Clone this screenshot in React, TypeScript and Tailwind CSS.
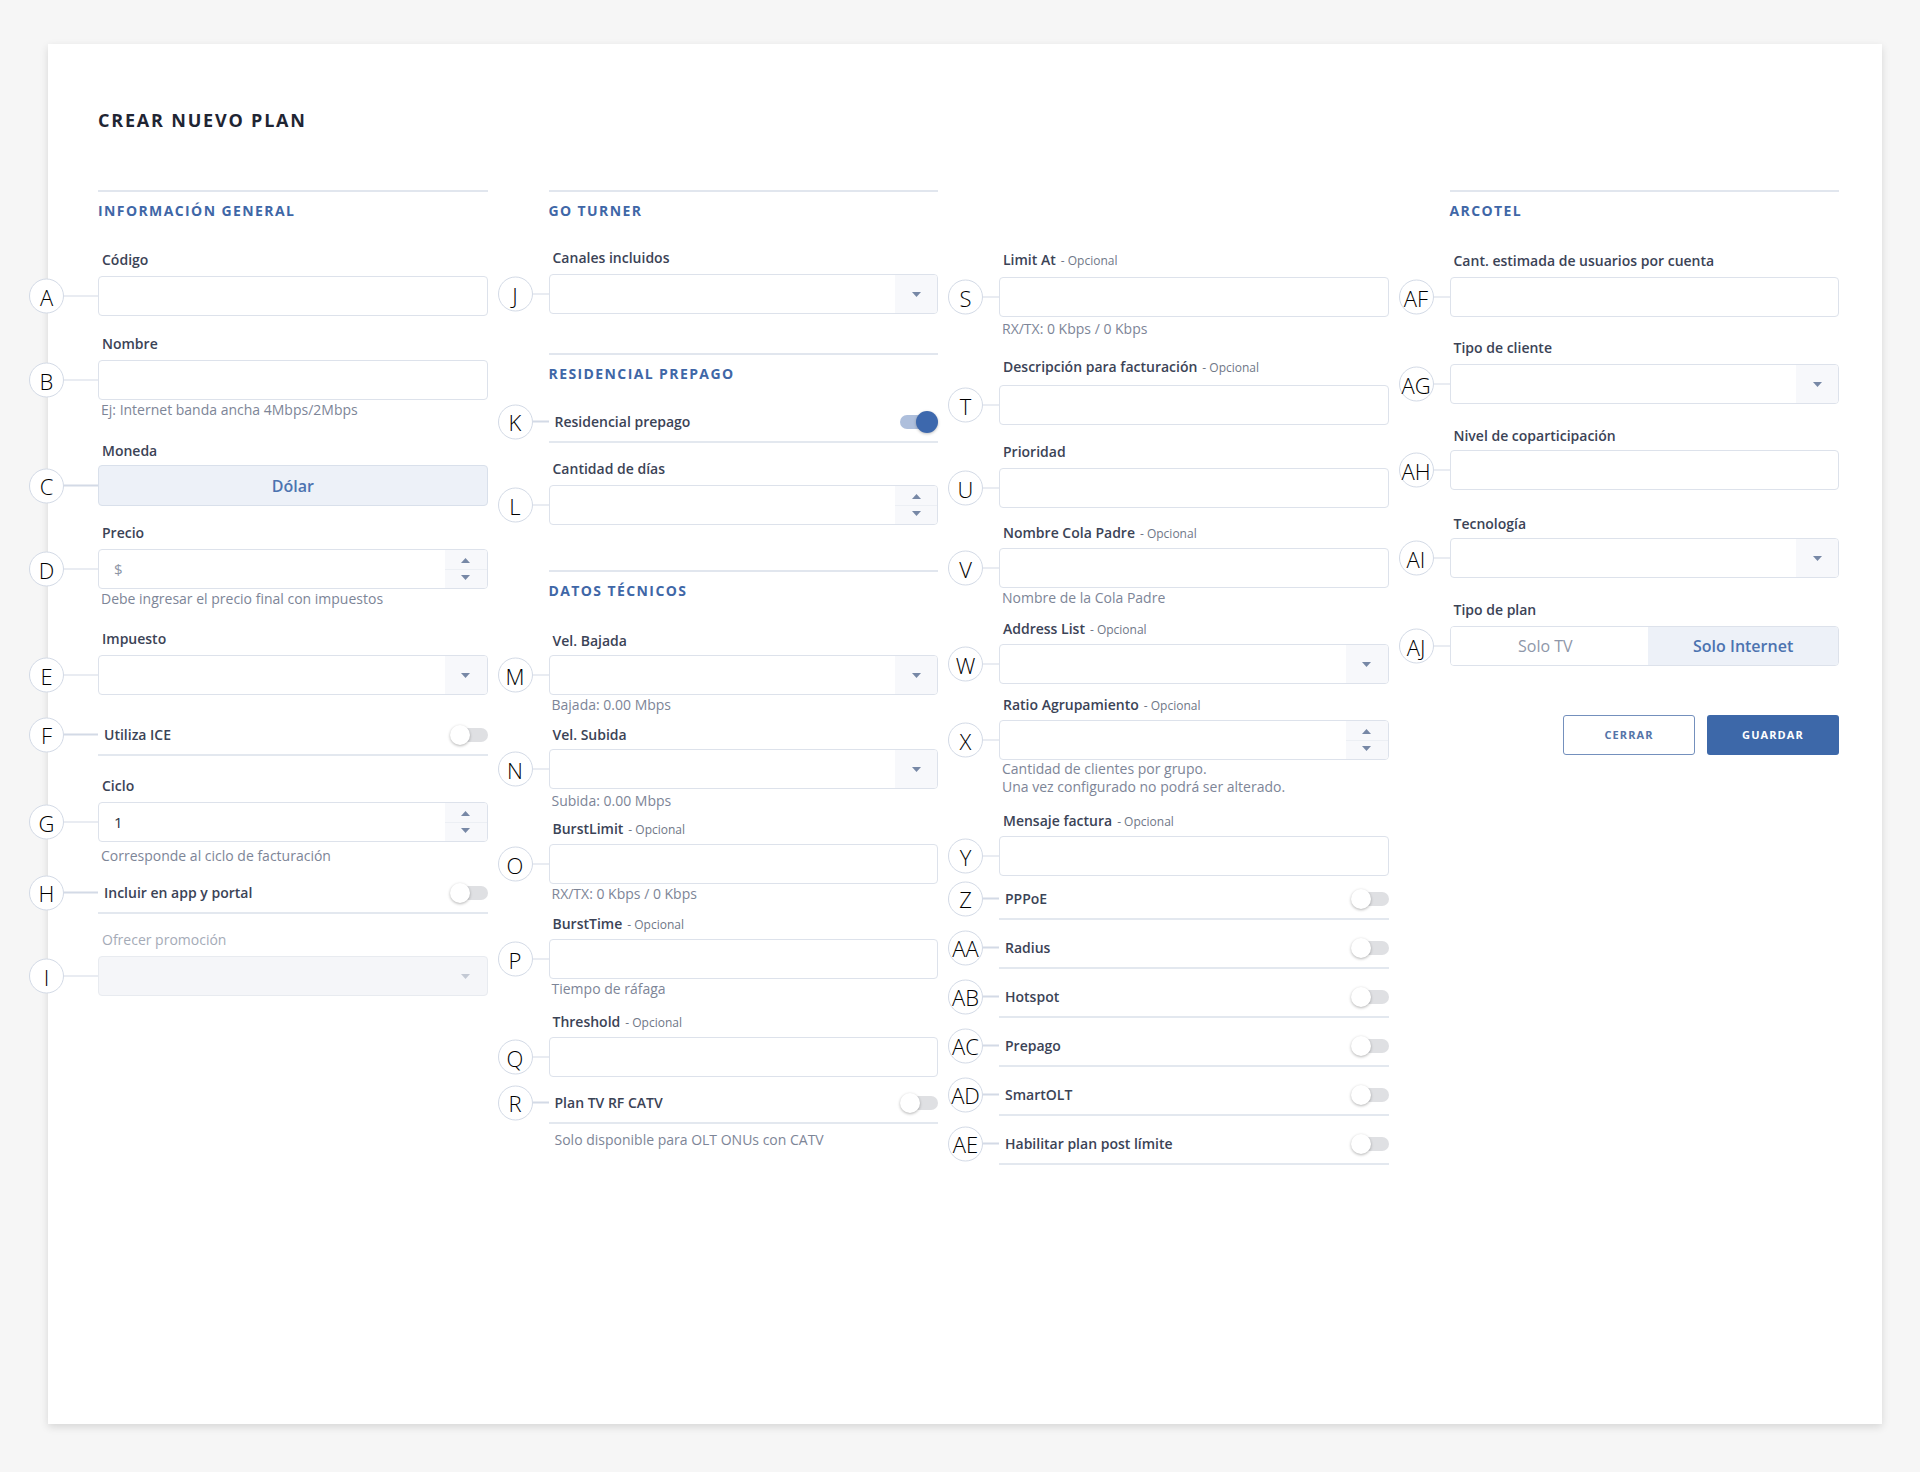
import React from "react";

type Kind = "text" | "select" | "number" | "disabled";

function Caret({ up, light }: { up?: boolean; light?: boolean }) {
  return (
    <svg width="9" height="5" viewBox="0 0 9 5" className={up ? "rotate-180" : ""}>
      <path d="M0 0h9L4.5 5z" fill={light ? "#c3c9d4" : "#7788a6"} />
    </svg>
  );
}

function Marker({ id, wide }: { id: string; wide?: boolean }) {
  return (
    <div className={`absolute top-1/2 flex -translate-y-1/2 items-center ${wide ? "-left-[69px]" : "-left-[51px]"}`}>
      <div className="flex h-[35px] w-[35px] items-center justify-center rounded-full border-[1.5px] border-[#d3dae6] bg-white text-[22px] font-light leading-none text-black">
        {id}
      </div>
      <div className={`h-[1.5px] bg-[#d3dae6] ${wide ? "w-[34px]" : "w-[16px]"}`} />
    </div>
  );
}

function Box({ kind, value, placeholder }: { kind: Kind; value?: string; placeholder?: string }) {
  const disabled = kind === "disabled";
  return (
    <div
      className={`flex h-10 overflow-hidden rounded-[4px] border ${
        disabled ? "border-[#e8ebf0] bg-[#f5f6f9]" : "border-[#dde2eb] bg-white"
      }`}
    >
      <div className="flex flex-1 items-center px-[15px] text-[15px] text-[#2b3240]">
        {value}
        {placeholder && <span className="text-[#8d95a5]">{placeholder}</span>}
      </div>
      {(kind === "select" || disabled) && (
        <div className={`flex w-[42px] items-center justify-center ${disabled ? "" : "bg-[#f7f8fb]"}`}>
          <Caret light={disabled} />
        </div>
      )}
      {kind === "number" && (
        <div className="flex w-[42px] flex-col bg-[#f7f8fb]">
          <div className="flex flex-1 items-center justify-center pt-[3px]">
            <Caret up />
          </div>
          <div className="h-px bg-[#eceff4]" />
          <div className="flex flex-1 items-center justify-center pb-[3px]">
            <Caret />
          </div>
        </div>
      )}
    </div>
  );
}

function Field({
  id,
  wide,
  label,
  optional,
  kind = "text",
  value,
  placeholder,
  hint,
  className,
  gap = "mt-1.5",
  hintClass = "",
  disabled,
}: {
  id: string;
  wide?: boolean;
  label: string;
  optional?: boolean;
  kind?: Kind;
  value?: string;
  placeholder?: string;
  hint?: React.ReactNode;
  className: string;
  gap?: string;
  hintClass?: string;
  disabled?: boolean;
}) {
  return (
    <div className={className}>
      <div
        className={`flex items-baseline pl-1 text-[14px] leading-5 ${
          disabled ? "font-normal text-[#a5abb7]" : "font-semibold text-[#3b4356]"
        }`}
      >
        {label}
        {optional && <span className="ml-[5px] text-[12px] font-normal text-[#6f7787]">- Opcional</span>}
      </div>
      <div className={`relative ${gap}`}>
        <Marker id={id} wide={wide} />
        <Box kind={kind} value={value} placeholder={placeholder} />
      </div>
      {hint && <div className={`pl-[3px] text-[14px] leading-5 text-[#7d8597] ${hintClass}`}>{hint}</div>}
    </div>
  );
}

function Toggle({ on }: { on?: boolean }) {
  if (on) {
    return (
      <div className="relative h-[22px] w-[38px]">
        <div className="absolute left-0 top-[4px] h-[14px] w-[34px] rounded-full bg-[#aebfdc]" />
        <div className="absolute right-0 top-0 h-[22px] w-[22px] rounded-full bg-[#3d68ad] shadow-[0_1px_3px_rgba(0,0,0,0.25)]" />
      </div>
    );
  }
  return (
    <div className="relative h-[20px] w-[38px]">
      <div className="absolute right-0 top-[3px] h-[14px] w-[34px] rounded-full bg-[#dfe0e3]" />
      <div className="absolute left-0 top-0 h-[20px] w-[20px] rounded-full bg-white shadow-[0_1px_3px_rgba(0,0,0,0.3)]" />
    </div>
  );
}

function ToggleRow({ id, wide, label, on, className }: { id: string; wide?: boolean; label: string; on?: boolean; className: string }) {
  return (
    <div className={`relative flex h-[41px] items-center justify-between border-b-2 border-[#e3e8ef] pl-1.5 ${className}`}>
      <Marker id={id} wide={wide} />
      <span className="text-[14px] font-semibold text-[#3b4356]">{label}</span>
      <Toggle on={on} />
    </div>
  );
}

function Section({ title, className = "" }: { title: string; className?: string }) {
  return (
    <div className={`border-t-2 border-[#e1e6ee] pt-[9px] text-[14px] font-bold leading-5 tracking-[0.1em] text-[#3f67a7] ${className}`}>
      {title}
    </div>
  );
}

export default function App() {
  return (
    <div className="min-h-[1472px] bg-[#f6f6f6] pb-[48px] pt-[44px] font-['Open_Sans',sans-serif]">
      <div className="ml-[48px] h-[1380px] w-[1834px] bg-white pl-[50px] pr-[43px] pt-[64px] shadow-[0_3px_8px_rgba(0,0,0,0.13)]">
        <h1 className="text-[18px] font-bold leading-6 tracking-[0.1em] text-[#1f2533]">CREAR NUEVO PLAN</h1>

        <div className="mt-[58px] grid grid-cols-4 gap-x-[61px]">
          {/* Columna 1 */}
          <div className="flex flex-col">
            <Section title="INFORMACIÓN GENERAL" />
            <Field id="A" wide label="Código" className="mt-[29px]" />
            <Field id="B" wide label="Nombre" className="mt-[18px]" hint="Ej: Internet banda ancha 4Mbps/2Mbps" />
            <div className="mt-[21px]">
              <div className="pl-1 text-[14px] font-semibold leading-5 text-[#3b4356]">Moneda</div>
              <div className="relative mt-1">
                <Marker id="C" wide />
                <div className="flex h-[41px] items-center justify-center rounded-[4px] border border-[#d9e0eb] bg-[#edf1f8] text-[16px] font-semibold text-[#4c73b0]">
                  Dólar
                </div>
              </div>
            </div>
            <Field id="D" wide label="Precio" kind="number" placeholder="$" className="mt-[17px]" hint="Debe ingresar el precio final con impuestos" />
            <Field id="E" wide label="Impuesto" kind="select" className="mt-5" />
            <ToggleRow id="F" wide label="Utiliza ICE" className="mt-5" />
            <Field id="G" wide label="Ciclo" kind="number" value="1" className="mt-5" hint="Corresponde al ciclo de facturación" hintClass="mt-1" />
            <ToggleRow id="H" wide label="Incluir en app y portal" className="mt-[7px]" />
            <Field id="I" wide label="Ofrecer promoción" kind="disabled" disabled className="mt-4" />
          </div>

          {/* Columna 2 */}
          <div className="flex flex-col">
            <Section title="GO TURNER" />
            <Field id="J" label="Canales incluidos" kind="select" className="mt-[27px]" />
            <Section title="RESIDENCIAL PREPAGO" className="mt-[39px]" />
            <ToggleRow id="K" label="Residencial prepago" on className="mt-[18px]" />
            <Field id="L" label="Cantidad de días" kind="number" className="mt-4" />
            <Section title="DATOS TÉCNICOS" className="mt-[45px]" />
            <Field id="M" label="Vel. Bajada" kind="select" gap="mt-1" className="mt-[30px]" hint="Bajada: 0.00 Mbps" />
            <Field id="N" label="Vel. Subida" kind="select" gap="mt-1" className="mt-[10px]" hint="Subida: 0.00 Mbps" hintClass="mt-[2px]" />
            <Field id="O" label="BurstLimit" optional gap="mt-1" className="mt-2" hint="RX/TX: 0 Kbps / 0 Kbps" />
            <Field id="P" label="BurstTime" optional gap="mt-1" className="mt-[10px]" hint="Tiempo de ráfaga" />
            <Field id="Q" label="Threshold" optional gap="mt-1" className="mt-[13px]" />
            <ToggleRow id="R" label="Plan TV RF CATV" className="mt-[6px]" />
            <div className="mt-[6px] pl-1.5 text-[14px] leading-5 text-[#7d8597]">Solo disponible para OLT ONUs con CATV</div>
          </div>

          {/* Columna 3 */}
          <div className="flex flex-col">
            <div className="h-[31px]" />
            <Field id="S" label="Limit At" optional className="mt-[29px]" hint="RX/TX: 0 Kbps / 0 Kbps" hintClass="mt-[2px]" />
            <Field id="T" label="Descripción para facturación" optional gap="mt-[7px]" className="mt-[18px]" />
            <Field id="U" label="Prioridad" className="mt-[17px]" />
            <Field id="V" label="Nombre Cola Padre" optional gap="mt-1" className="mt-[15px]" />
            <div className="pl-[3px] text-[14px] leading-5 text-[#7d8597]">Nombre de la Cola Padre</div>
            <Field id="W" label="Address List" optional kind="select" gap="mt-1" className="mt-[11px]" />
            <Field
              id="X"
              label="Ratio Agrupamiento"
              optional
              kind="number"
              gap="mt-1"
              className="mt-[11px]"
              hintClass="leading-[18px]"
              hint={
                <>
                  Cantidad de clientes por grupo.
                  <br />
                  Una vez configurado no podrá ser alterado.
                </>
              }
            />
            <Field id="Y" label="Mensaje factura" optional gap="mt-1" className="mt-[15px]" />
            <ToggleRow id="Z" label="PPPoE" className="mt-[3px]" />
            <ToggleRow id="AA" label="Radius" className="mt-2" />
            <ToggleRow id="AB" label="Hotspot" className="mt-2" />
            <ToggleRow id="AC" label="Prepago" className="mt-2" />
            <ToggleRow id="AD" label="SmartOLT" className="mt-2" />
            <ToggleRow id="AE" label="Habilitar plan post límite" className="mt-2" />
          </div>

          {/* Columna 4 */}
          <div className="flex flex-col">
            <Section title="ARCOTEL" />
            <Field id="AF" label="Cant. estimada de usuarios por cuenta" className="mt-[30px]" />
            <Field id="AG" label="Tipo de cliente" kind="select" className="mt-[21px]" />
            <Field id="AH" label="Nivel de coparticipación" gap="mt-1" className="mt-[22px]" />
            <Field id="AI" label="Tecnología" kind="select" gap="mt-1" className="mt-6" />
            <div className="mt-[22px]">
              <div className="pl-1 text-[14px] font-semibold leading-5 text-[#3b4356]">Tipo de plan</div>
              <div className="relative mt-1.5">
                <Marker id="AJ" />
                <div className="flex h-10 overflow-hidden rounded-[4px] border border-[#dde2eb]">
                  <div className="flex flex-1 items-center justify-center bg-white pr-2 text-[16px] text-[#8e97a9]">Solo TV</div>
                  <div className="flex flex-1 items-center justify-center bg-[#edf1f8] text-[16px] font-semibold text-[#4c73b0]">
                    Solo Internet
                  </div>
                </div>
              </div>
            </div>
            <div className="mt-[49px] flex justify-end gap-3">
              <button className="h-10 w-[132px] rounded-[3px] border border-[#7490bd] bg-white text-[11px] font-bold tracking-[0.1em] text-[#5474a8]">
                CERRAR
              </button>
              <button className="h-10 w-[132px] rounded-[3px] bg-[#3d68a9] text-[11px] font-bold tracking-[0.1em] text-white">
                GUARDAR
              </button>
            </div>
          </div>
        </div>
      </div>
    </div>
  );
}
